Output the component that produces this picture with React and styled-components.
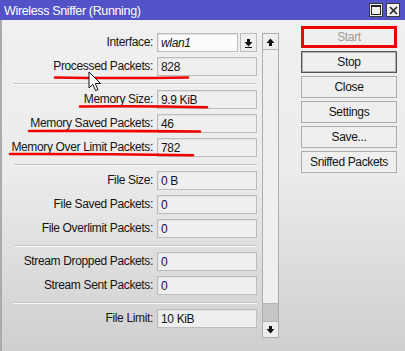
import React from "react";
import styled, { createGlobalStyle } from "styled-components";

const GlobalStyle = createGlobalStyle`
  html, body {
    margin: 0;
    padding: 0;
  }
  body {
    width: 405px;
    height: 351px;
    overflow: hidden;
    font-family: "Liberation Sans", Arial, sans-serif;
  }
  * {
    box-sizing: border-box;
  }
`;

const Window = styled.div`
  position: relative;
  width: 405px;
  height: 351px;
  display: flex;
  flex-direction: column;
  font-size: 12px;
  letter-spacing: -0.35px;
  color: #141414;
`;

const TitleBar = styled.div`
  height: 20px;
  flex: none;
  display: flex;
  align-items: center;
  gap: 3px;
  padding: 0 5px 0 4px;
  background: #5353c8;
  color: #fff;
  font-size: 12.5px;
`;

const Title = styled.div`
  flex: 1;
  padding-top: 1px;
`;

const TitleButton = styled.div`
  width: 14px;
  height: 14px;
  display: flex;
  align-items: center;
  justify-content: center;
  background: #f0f0f0;
  border: 1px solid #3a3a3a;
`;

const Body = styled.div`
  flex: 1;
  display: flex;
  align-items: flex-start;
  padding: 6px 8px 0 12px;
  border-left: 2px solid #ababab;
  background: linear-gradient(#f0f0f0 0%, #ececec 45%, #cfcfcf 100%);
`;

const Form = styled.div`
  width: 243px;
  margin-top: 7px;
  display: flex;
  flex-direction: column;
`;

const Row = styled.div`
  display: grid;
  grid-template-columns: 139px 100px;
  column-gap: 4px;
  height: 19px;
  margin-bottom: 5px;
`;

const Label = styled.div`
  display: flex;
  justify-content: flex-end;
  white-space: nowrap;
  line-height: 19px;
`;

const Value = styled.div`
  height: 19px;
  padding-left: 3px;
  line-height: 18px;
  white-space: nowrap;
  background: ${(p) => (p.editable ? "#fbfbfb" : "#efefef")};
  border: 1px solid #bdbdbd;
  box-shadow: inset 1px 1px 0 #e2e2e2;
  font-style: ${(p) => (p.italic ? "italic" : "normal")};
  flex: 1;
`;

const Combo = styled.div`
  display: flex;
  gap: 2px;
`;

const DropButton = styled.div`
  width: 17px;
  height: 19px;
  display: flex;
  align-items: center;
  justify-content: center;
  background: #efefef;
  border: 1px solid #bdbdbd;
`;

const Separator = styled.div`
  height: 2px;
  margin: 2px 0 5px;
  border-top: 1px solid #c6c6c6;
  border-bottom: 1px solid #fafafa;
`;

const ScrollBar = styled.div`
  width: 17px;
  height: 305px;
  margin: 7px 0 0 5px;
  display: flex;
  flex-direction: column;
  border: 1px solid #adadad;
  background: #efefef;
`;

const ScrollArrow = styled.div`
  height: 16px;
  flex: none;
  display: flex;
  align-items: center;
  justify-content: center;
  border-${(p) => (p.down ? "top" : "bottom")}: 1px solid #b4b4b4;
  background: #eeeeee;
`;

const Track = styled.div`
  flex: 1;
  display: flex;
  flex-direction: column;
  justify-content: flex-end;
`;

const Thumb = styled.div`
  height: 18px;
  background: #c6c6c6;
  border-top: 1px solid #b4b4b4;
`;

const Buttons = styled.div`
  width: 96px;
  margin-left: 22px;
  display: flex;
  flex-direction: column;
  gap: 3px;
`;

const Button = styled.div`
  height: 22px;
  display: flex;
  align-items: center;
  justify-content: center;
  background: #efefef;
  color: ${(p) => (p.disabled ? "#9a9a9a" : "#141414")};
  border: ${(p) =>
    p.marked ? "3px solid #f00000" : p.primary ? "1px solid #555" : "1px solid #acacac"};
  box-shadow: ${(p) => (p.primary ? "inset 0 0 0 1px #b0b0b0" : "none")};
`;

const Overlay = styled.svg`
  position: absolute;
  left: 0;
  top: 0;
  pointer-events: none;
`;

const fields = [
  [
    ["Memory Size:", "9.9 KiB"],
    ["Memory Saved Packets:", "46"],
    ["Memory Over Limit Packets:", "782"],
  ],
  [
    ["File Size:", "0 B"],
    ["File Saved Packets:", "0"],
    ["File Overlimit Packets:", "0"],
  ],
  [
    ["Stream Dropped Packets:", "0"],
    ["Stream Sent Packets:", "0"],
  ],
  [["File Limit:", "10 KiB"]],
];

const ArrowIcon = ({ down, bar }) => (
  <svg width="9" height="10" viewBox="0 0 9 10">
    <g transform={down ? "rotate(180 4.5 5)" : undefined}>
      {bar && <rect x="1" y="9" width="7" height="1.5" fill="#111" transform="translate(0 -9.5)" />}
      <path d="M4.5 1.5 L8.5 6 L6 6 L6 9 L3 9 L3 6 L0.5 6 Z" fill="#111" />
    </g>
  </svg>
);

const App = () => (
  <>
    <GlobalStyle />
    <Window>
      <TitleBar>
        <Title>Wireless Sniffer (Running)</Title>
        <TitleButton>
          <svg width="10" height="10" viewBox="0 0 10 10">
            <rect x="0.5" y="0.5" width="9" height="9" fill="none" stroke="#222" />
            <rect x="0" y="0" width="10" height="2" fill="#222" />
          </svg>
        </TitleButton>
        <TitleButton>
          <svg width="9" height="9" viewBox="0 0 9 9">
            <path d="M1 1 L8 8 M8 1 L1 8" stroke="#222" strokeWidth="1.6" />
          </svg>
        </TitleButton>
      </TitleBar>
      <Body>
        <Form>
          <Row>
            <Label>Interface:</Label>
            <Combo>
              <Value editable italic>wlan1</Value>
              <DropButton>
                <ArrowIcon down bar />
              </DropButton>
            </Combo>
          </Row>
          <Row>
            <Label>Processed Packets:</Label>
            <Value>828</Value>
          </Row>
          {fields.map((group, i) => (
            <React.Fragment key={i}>
              <Separator />
              {group.map(([label, value]) => (
                <Row key={label}>
                  <Label>{label}</Label>
                  <Value>{value}</Value>
                </Row>
              ))}
            </React.Fragment>
          ))}
        </Form>
        <ScrollBar>
          <ScrollArrow>
            <ArrowIcon />
          </ScrollArrow>
          <Track>
            <Thumb />
          </Track>
          <ScrollArrow down>
            <ArrowIcon down />
          </ScrollArrow>
        </ScrollBar>
        <Buttons>
          <Button disabled marked>Start</Button>
          <Button primary>Stop</Button>
          <Button>Close</Button>
          <Button>Settings</Button>
          <Button>Save...</Button>
          <Button>Sniffed Packets</Button>
        </Buttons>
      </Body>
      <Overlay width="405" height="351" viewBox="0 0 405 351">
        <g stroke="#f00000" strokeWidth="2.6" strokeLinecap="round" fill="none">
          <path d="M55 77.5 Q120 78.5 188 77.5" />
          <path d="M80 106.5 Q140 105.8 207 107.2" />
          <path d="M29 131 Q115 130.5 200 131.5" />
          <path d="M10 154 Q100 153.8 193 155.2" />
        </g>
        <path
          d="M89 72 L89 88 L92.8 84.4 L95.6 90.6 L98 89.6 L95.3 83.5 L100.5 83.5 Z"
          fill="#fff"
          stroke="#111"
          strokeWidth="1"
          strokeLinejoin="round"
        />
      </Overlay>
    </Window>
  </>
);

export default App;
